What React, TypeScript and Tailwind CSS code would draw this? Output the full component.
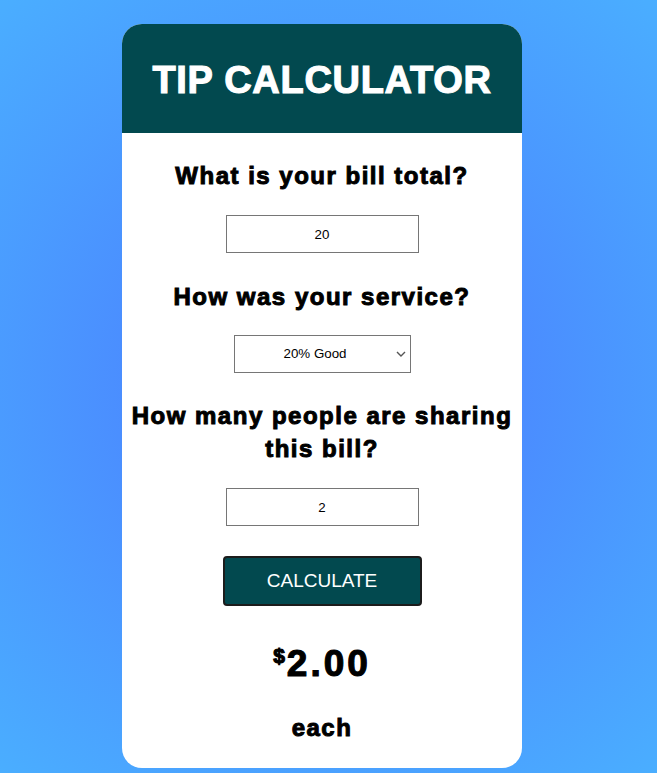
import { useState } from "react";

const heading =
  "font-['Liberation_Sans',Arial,sans-serif] text-[24px] font-bold leading-[33px] tracking-[1.5px] text-black [-webkit-text-stroke:1px_#000]";

const field =
  "h-[38px] border border-[#767676] bg-white text-center font-['Liberation_Sans',Arial,sans-serif] text-[13.33px] text-black outline-none";

export default function App() {
  const [bill, setBill] = useState("20");
  const [service, setService] = useState("0.2");
  const [people, setPeople] = useState("2");
  const [each, setEach] = useState("2.00");

  const calculate = () => {
    const total = parseFloat(bill) || 0;
    const count = Math.max(1, parseInt(people) || 1);
    setEach(((total * parseFloat(service)) / count).toFixed(2));
  };

  return (
    <div className="flex min-h-screen justify-center bg-[radial-gradient(circle_at_center,#4b78ff_0%,#4aaeff_100%)] pr-[13px] pt-[24px]">
      <div className="flex h-[744px] w-[400px] flex-col items-center overflow-hidden rounded-[20px] bg-white">
        <header className="flex h-[109px] w-full items-center justify-center bg-[#02494f] pt-[3px]">
          <h1 className="font-['Liberation_Sans',Arial,sans-serif] text-[38px] font-bold tracking-[0.7px] text-white [-webkit-text-stroke:1.1px_#fff]">
            TIP CALCULATOR
          </h1>
        </header>

        <h2 className={`${heading} mt-[26px] text-center`}>What is your bill total?</h2>
        <input
          className={`${field} mt-[23px] w-[193px]`}
          value={bill}
          onChange={(e) => setBill(e.target.value)}
        />

        <h2 className={`${heading} mt-[27px] text-center`}>How was your service?</h2>
        <div className="relative mt-[22px] w-[177px]">
          <select
            className={`${field} w-full appearance-none pr-[14px] [text-align-last:center]`}
            value={service}
            onChange={(e) => setService(e.target.value)}
          >
            <option value="0.3">30% Outstanding</option>
            <option value="0.2">20% Good</option>
            <option value="0.15">15% It was OK</option>
            <option value="0.1">10% Bad</option>
            <option value="0.05">5% Terrible</option>
          </select>
          <svg
            className="pointer-events-none absolute right-[5px] top-[16px] h-[6px] w-[10px]"
            viewBox="0 0 10 6"
            fill="none"
            stroke="#555"
            strokeWidth="1.4"
          >
            <path d="M1 1l4 4 4-4" />
          </svg>
        </div>

        <h2 className={`${heading} mt-[26px] w-full text-center`}>
          How many people are sharing this bill?
        </h2>
        <input
          className={`${field} mt-[23px] w-[193px]`}
          value={people}
          onChange={(e) => setPeople(e.target.value)}
        />

        <button
          onClick={calculate}
          className="mt-[30px] h-[50px] w-[199px] rounded-[4px] border-2 border-[#1c1c1c] bg-[#02494f] font-['Liberation_Sans',Arial,sans-serif] text-[19px] text-white"
        >
          CALCULATE
        </button>

        <div className="mt-[37px] flex items-start font-['Liberation_Sans',Arial,sans-serif] font-bold text-black [-webkit-text-stroke:1.1px_#000]">
          <sup className="top-0 mt-[3px] mr-[2px] text-[21px] leading-[20px]">$</sup>
          <span className="text-[37px] leading-[41px] tracking-[3px]">{each}</span>
        </div>

        <p className={`${heading} mt-[27px] text-center`}>each</p>
      </div>
    </div>
  );
}
